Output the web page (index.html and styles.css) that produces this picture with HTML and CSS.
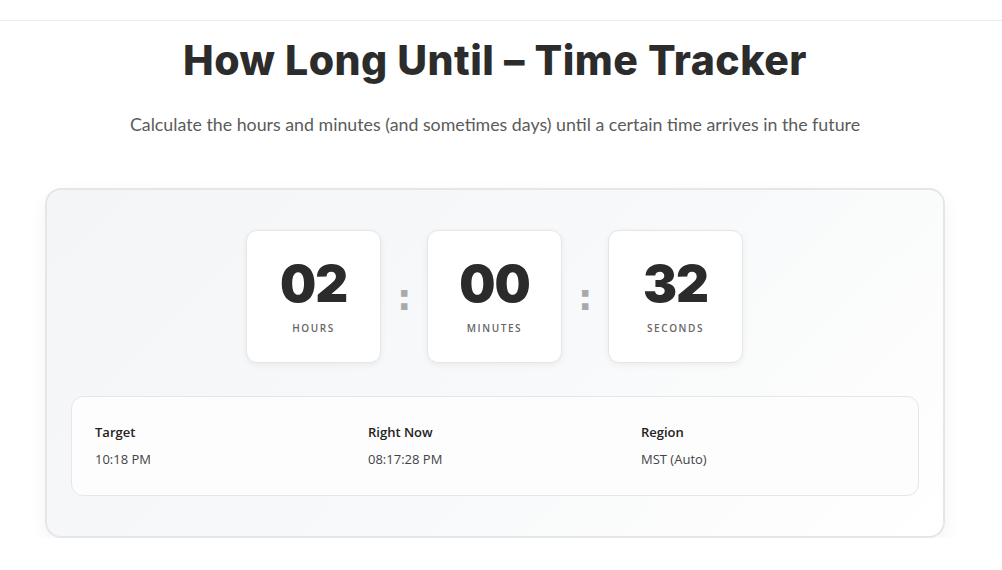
FILE: index.html
```html
<!DOCTYPE html>
<html lang="en">
<head>
<meta charset="utf-8">
<title>How Long Until – Time Tracker</title>
<link rel="stylesheet" href="styles.css">
</head>
<body>
<header class="topbar"></header>
<main class="page">
  <h1 class="title">How Long Until – Time Tracker</h1>
  <p class="subtitle">Calculate the hours and minutes (and sometimes days) until a certain time arrives in the future</p>
  <section class="card">
    <div class="timer">
      <div class="unit">
        <div class="num">02</div>
        <div class="label">HOURS</div>
      </div>
      <div class="sep">:</div>
      <div class="unit">
        <div class="num">00</div>
        <div class="label">MINUTES</div>
      </div>
      <div class="sep">:</div>
      <div class="unit">
        <div class="num">32</div>
        <div class="label">SECONDS</div>
      </div>
    </div>
    <div class="info">
      <div class="info-col">
        <div class="info-label">Target</div>
        <div class="info-value">10:18 PM</div>
      </div>
      <div class="info-col">
        <div class="info-label">Right Now</div>
        <div class="info-value">08:17:28 PM</div>
      </div>
      <div class="info-col">
        <div class="info-label">Region</div>
        <div class="info-value">MST (Auto)</div>
      </div>
    </div>
  </section>
</main>
</body>
</html>
```
FILE: styles.css
```css
* { box-sizing: border-box; }
html, body { margin: 0; padding: 0; background: #ffffff; }
body {
  font-family: "Lato", "Open Sans", sans-serif;
  color: #2d2d2d;
  padding-right: 12px;
}

.topbar {
  height: 21px;
  border-bottom: 1px solid #ececec;
  margin-right: -12px;
}

.page {
  width: 900px;
  margin: 0 auto;
  display: flex;
  flex-direction: column;
  align-items: center;
}

.title {
  margin: 15px 0 0;
  font-family: "Inter", sans-serif;
  font-weight: 800;
  font-size: 41px;
  line-height: 48px;
  color: #2c2c2c;
  letter-spacing: 0.5px;
  white-space: nowrap;
}

.subtitle {
  margin: 28px 0 0;
  font-size: 17.8px;
  line-height: 24px;
  color: #5b5b5b;
  white-space: nowrap;
}

.card {
  margin-top: 52px;
  width: 900px;
  border: 2px solid #e4e6e9;
  border-radius: 16px;
  background: linear-gradient(135deg, #f4f5f7 0%, #f8f9fa 55%, #ffffff 100%);
  box-shadow: 0 6px 18px rgba(0, 0, 0, 0.05);
  padding: 40px 24px 40px;
  display: flex;
  flex-direction: column;
  gap: 33px;
}

.timer {
  display: flex;
  justify-content: center;
  align-items: center;
  gap: 16px;
  padding-right: 1px;
}

.unit {
  width: 135px;
  height: 133px;
  background: #ffffff;
  border: 1px solid #e5e6e8;
  border-radius: 11px;
  box-shadow: 0 2px 6px rgba(0, 0, 0, 0.06);
  display: flex;
  flex-direction: column;
  align-items: center;
  padding-top: 23px;
}

.num {
  font-family: "Inter", sans-serif;
  font-weight: 900;
  font-size: 51px;
  line-height: 60px;
  color: #2b2b2b;
  letter-spacing: -1px;
}

.label {
  margin-top: 7px;
  font-family: "Open Sans", sans-serif;
  font-size: 10px;
  font-weight: 600;
  letter-spacing: 1.6px;
  color: #666666;
}

.sep {
  width: 14px;
  text-align: center;
  font-family: "DejaVu Sans", sans-serif;
  font-weight: 700;
  font-size: 36px;
  color: #a9a9a9;
  padding-top: 2px;
}

.info {
  background: #fdfdfe;
  border: 1px solid #e4e6e9;
  border-radius: 12px;
  height: 100px;
  padding: 25px 24px 0 23px;
  display: grid;
  grid-template-columns: repeat(3, 1fr);
  column-gap: 20px;
}

.info-label {
  font-family: "Open Sans", sans-serif;
  font-weight: 600;
  font-size: 13px;
  line-height: 20px;
  color: #222222;
}

.info-value {
  margin-top: 7px;
  font-family: "Open Sans", sans-serif;
  font-size: 13px;
  line-height: 20px;
  color: #444444;
}
```
